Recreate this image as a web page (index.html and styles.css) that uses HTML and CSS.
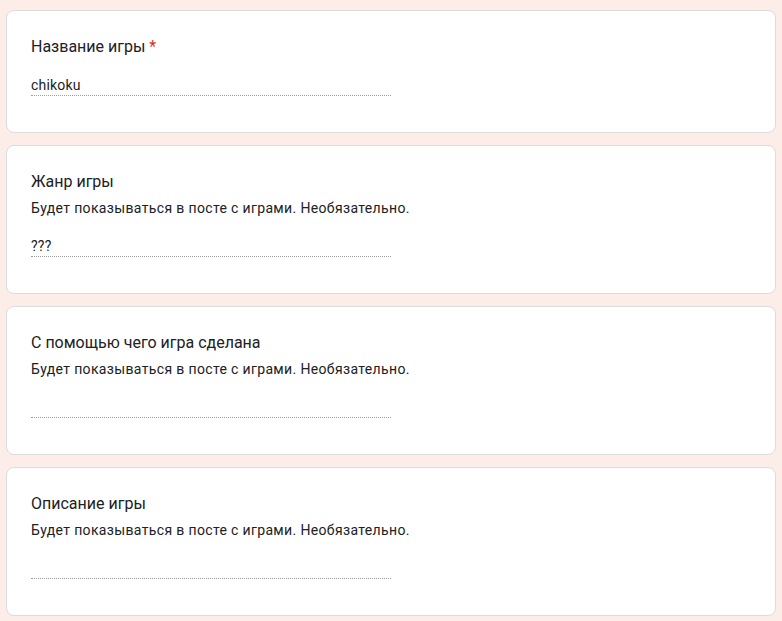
FILE: index.html
```html
<!DOCTYPE html>
<html lang="ru">

<head>
    <meta charset="UTF-8">
    <meta name="viewport" content="width=device-width, initial-scale=1.0">
    <title>Анкета игры</title>
    <link rel="stylesheet" href="styles.css">
</head>

<body>
    <div class="form">
        <!-- Название -->
        <div class="question">
            <div class="question-title">Название игры <span class="required">*</span></div>
            <div class="answer">chikoku</div>
        </div>

        <!-- Жанр -->
        <div class="question">
            <div class="question-title">Жанр игры</div>
            <div class="question-desc">Будет показываться в посте с играми. Необязательно.</div>
            <div class="answer">???</div>
        </div>

        <!-- Движок -->
        <div class="question">
            <div class="question-title">С помощью чего игра сделана</div>
            <div class="question-desc">Будет показываться в посте с играми. Необязательно.</div>
            <div class="answer"></div>
        </div>

        <!-- Описание -->
        <div class="question">
            <div class="question-title">Описание игры</div>
            <div class="question-desc">Будет показываться в посте с играми. Необязательно.</div>
            <div class="answer"></div>
        </div>
    </div>
</body>

</html>
```

FILE: styles.css
```css
body {
    margin: 0;
    padding: 10px 6px;
    background-color: #fdede8;
    font-family: Roboto, "Liberation Sans", Arial, sans-serif;
    color: #202124;
}

.form {
    display: flex;
    flex-direction: column;
    gap: 12px;
}

.question {
    background-color: white;
    border: 1px solid #dadce0;
    border-radius: 8px;
    padding: 24px;
}

.question-title {
    font-size: 16px;
    line-height: 24px;
}

.required {
    color: #d93025;
}

.question-desc {
    font-size: 14px;
    line-height: 20px;
    letter-spacing: 0.35px;
    margin-top: 4px;
    padding-bottom: 2px;
}

.answer {
    width: 360px;
    height: 20px;
    margin-top: 16px;
    margin-bottom: 12px;
    font-size: 14px;
    line-height: 20px;
    letter-spacing: 0.2px;
    border-bottom: 1px dotted #9e9e9e;
}
```
